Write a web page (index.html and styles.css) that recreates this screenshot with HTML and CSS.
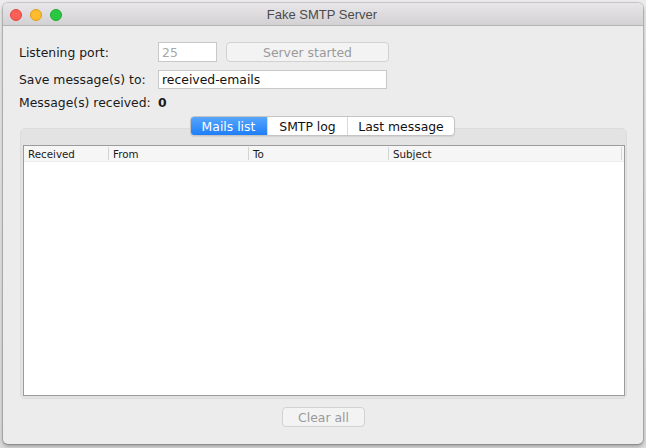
FILE: index.html
```html
<!DOCTYPE html>
<html>
<head>
<meta charset="utf-8">
<link rel="stylesheet" href="styles.css">
</head>
<body>
<div class="desktop">
  <div class="window">
    <div class="titlebar">
      <div class="lights">
        <span class="light red"></span>
        <span class="light yellow"></span>
        <span class="light green"></span>
      </div>
      <div class="title">Fake SMTP Server</div>
    </div>
    <div class="content">
      <div class="form">
        <div class="label">Listening port:</div>
        <div class="row1">
          <div class="field port">25</div>
          <div class="btn started">Server started</div>
        </div>
        <div class="label">Save message(s) to:</div>
        <div class="field path">received-emails</div>
        <div class="label">Message(s) received:</div>
        <div class="count">0</div>
      </div>
      <div class="tabs">
        <div class="tab active">Mails list</div>
        <div class="tab">SMTP log</div>
        <div class="tab">Last message</div>
      </div>
      <div class="panel">
        <div class="table">
          <div class="thead">
            <div class="th c1">Received</div>
            <div class="th c2">From</div>
            <div class="th c3">To</div>
            <div class="th c4">Subject</div>
          </div>
        </div>
      </div>
      <div class="footer">
        <div class="btn clear">Clear all</div>
      </div>
    </div>
  </div>
</div>
</body>
</html>
```

FILE: styles.css
```css
html, body {
  margin: 0;
  padding: 0;
}
body {
  width: 646px;
  height: 448px;
  overflow: hidden;
  background: #d4d4d6;
  font-family: "DejaVu Sans", sans-serif;
}
.desktop {
  width: 646px;
  height: 448px;
  padding: 3px 3px 0 3px;
  box-sizing: border-box;
  background: linear-gradient(#ececec, #dcdcdc);
}
.window {
  width: 640px;
  height: 441px;
  background: #ececec;
  border-radius: 5px;
  overflow: hidden;
  box-shadow: 0 0 0 1px rgba(0,0,0,0.12), 0 2px 4px rgba(0,0,0,0.35);
  display: flex;
  flex-direction: column;
}
.titlebar {
  height: 22px;
  flex: none;
  background: linear-gradient(#e8e6e8, #d3d1d3);
  border-bottom: 1px solid #b4b4b4;
  position: relative;
  display: flex;
  align-items: center;
  justify-content: center;
}
.lights {
  position: absolute;
  left: 7px;
  top: 6px;
  display: flex;
  gap: 8px;
}
.light {
  width: 12px;
  height: 12px;
  border-radius: 50%;
  box-sizing: border-box;
}
.red { background: #fc5f57; border: 1px solid #df4840; }
.yellow { background: #fdbc2e; border: 1px solid #dd9e1c; }
.green { background: #28c840; border: 1px solid #1ea932; }
.title {
  font-family: "Liberation Sans", sans-serif;
  font-size: 13px;
  color: #4b4b4b;
  margin-left: -2px;
}
.content {
  padding: 16px 16px 0 16px;
  display: flex;
  flex-direction: column;
}
.form {
  display: grid;
  grid-template-columns: 139px auto;
  grid-template-rows: 20px 19px 10px;
  row-gap: 8px;
  align-items: center;
  font-size: 12.4px;
  color: #1a1a1a;
}
.label {
  display: flex;
  align-items: center;
  height: 100%;
  white-space: nowrap;
}
.row1 {
  display: flex;
  gap: 9px;
}
.field {
  background: #fff;
  border: 1px solid #c8c8c8;
  box-sizing: border-box;
  display: flex;
  align-items: center;
  padding-left: 3px;
}
.port {
  width: 59px;
  height: 20px;
  color: #a8a8a8;
}
.path {
  width: 229px;
  height: 19px;
  color: #111;
}
.btn {
  box-sizing: border-box;
  display: flex;
  align-items: center;
  justify-content: center;
  border: 1px solid #d2d2d2;
  border-radius: 4px;
  background: #f3f3f3;
  color: #9a9a9a;
  font-size: 12.4px;
}
.started {
  width: 163px;
  height: 20px;
}
.count {
  font-weight: bold;
  display: flex;
  align-items: center;
  height: 100%;
}
.tabs {
  margin-top: 9px;
  align-self: center;
  margin-left: -1px;
  display: flex;
  height: 20px;
  box-sizing: border-box;
  border: 1px solid #c4c4c4;
  border-radius: 4px;
  background: #fff;
  position: relative;
  z-index: 1;
  margin-bottom: -8px;
  overflow: hidden;
  box-shadow: 0 1px 1px rgba(0,0,0,0.08);
}
.tab {
  display: flex;
  align-items: center;
  justify-content: center;
  font-size: 12.4px;
  color: #111;
  border-left: 1px solid #dadada;
}
.tab:nth-child(1) { width: 77px; border-left: none; }
.tab:nth-child(2) { width: 79px; }
.tab:nth-child(3) { width: 106px; }
.tab.active {
  background: linear-gradient(#5aa8fd, #1c7cf7);
  color: #fff;
  margin: -1px 0 -1px -1px;
  border-radius: 4px 0 0 4px;
}
.panel {
  margin-left: 1px;
  width: 607px;
  height: 271px;
  box-sizing: border-box;
  background: #e3e3e3;
  border: 1px solid #dcdcdc;
  border-radius: 5px;
  padding: 16px 1px 2px 2px;
}
.table {
  height: 251px;
  box-sizing: border-box;
  background: #fff;
  border: 1px solid #9b9b9b;
}
.thead {
  display: flex;
  height: 15px;
  background: #f6f6f6;
  border-bottom: 1px solid #ededed;
  font-size: 10.3px;
  color: #1a1a1a;
}
.th {
  box-sizing: border-box;
  padding-left: 4px;
  display: flex;
  align-items: center;
  border-right: 1px solid #d4d4d4;
  height: 13px;
  margin-top: 1px;
}
.c1 { width: 85px; }
.c2 { width: 140px; }
.c3 { width: 140px; }
.c4 { width: 233px; }
.footer {
  display: flex;
  justify-content: center;
  margin-top: 8px;
}
.clear {
  width: 83px;
  height: 20px;
  margin-left: 1px;
}
```
